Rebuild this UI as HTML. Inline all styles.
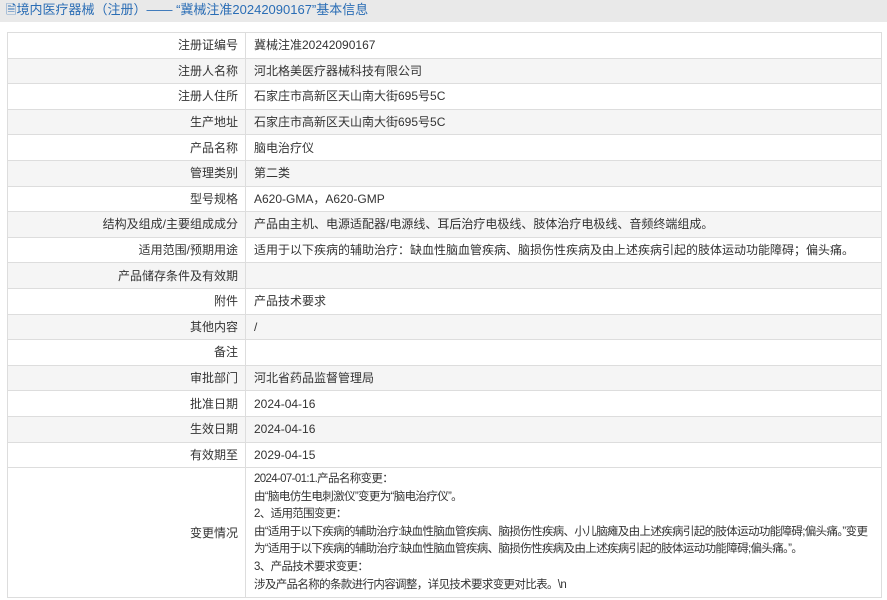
<!DOCTYPE html>
<html><head><meta charset="utf-8"><style>
body{margin:0;width:887px;height:600px;overflow:hidden;background:#fff;font-family:"Liberation Sans","Noto Sans CJK SC",sans-serif;font-size:12px;color:#333}
.hd{height:22px;background:#e9e9e9;color:#2a6db5;font-size:13px;line-height:20px;padding-left:6px}
table{position:absolute;left:7px;top:32px;width:875px;border-collapse:collapse;table-layout:fixed}
td{border:1px solid #ddd;height:24.6px;padding:0 8px;line-height:16px;overflow:hidden}
td.l{width:222px;text-align:right;padding-right:7px}
tr:nth-child(even){background:#f5f5f5}
tr.last{background:#fff}
td.ch{padding:3px 6px 3px 8px;line-height:17.6px;font-size:11.5px;letter-spacing:-0.65px;white-space:nowrap}
</style></head><body>
<div class="hd">🗎境内医疗器械（注册）—— “冀械注准20242090167”基本信息</div>
<table>
<tr><td class="l">注册证编号</td><td>冀械注准20242090167</td></tr>
<tr><td class="l">注册人名称</td><td>河北格美医疗器械科技有限公司</td></tr>
<tr><td class="l">注册人住所</td><td>石家庄市高新区天山南大街695号5C</td></tr>
<tr><td class="l">生产地址</td><td>石家庄市高新区天山南大街695号5C</td></tr>
<tr><td class="l">产品名称</td><td>脑电治疗仪</td></tr>
<tr><td class="l">管理类别</td><td>第二类</td></tr>
<tr><td class="l">型号规格</td><td>A620-GMA，A620-GMP</td></tr>
<tr><td class="l">结构及组成/主要组成成分</td><td>产品由主机、电源适配器/电源线、耳后治疗电极线、肢体治疗电极线、音频终端组成。</td></tr>
<tr><td class="l">适用范围/预期用途</td><td>适用于以下疾病的辅助治疗：缺血性脑血管疾病、脑损伤性疾病及由上述疾病引起的肢体运动功能障碍；偏头痛。</td></tr>
<tr><td class="l">产品储存条件及有效期</td><td></td></tr>
<tr><td class="l">附件</td><td>产品技术要求</td></tr>
<tr><td class="l">其他内容</td><td>/</td></tr>
<tr><td class="l">备注</td><td></td></tr>
<tr><td class="l">审批部门</td><td>河北省药品监督管理局</td></tr>
<tr><td class="l">批准日期</td><td>2024-04-16</td></tr>
<tr><td class="l">生效日期</td><td>2024-04-16</td></tr>
<tr><td class="l">有效期至</td><td>2029-04-15</td></tr>
<tr class="last"><td class="l">变更情况</td><td class="ch">2024-07-01:1.产品名称变更：<br>由“脑电仿生电刺激仪”变更为“脑电治疗仪”。<br>2、适用范围变更：<br>由“适用于以下疾病的辅助治疗:缺血性脑血管疾病、脑损伤性疾病、小儿脑瘫及由上述疾病引起的肢体运动功能障碍;偏头痛。”变更<br>为“适用于以下疾病的辅助治疗:缺血性脑血管疾病、脑损伤性疾病及由上述疾病引起的肢体运动功能障碍;偏头痛。”。<br>3、产品技术要求变更：<br>涉及产品名称的条款进行内容调整，详见技术要求变更对比表。\n</td></tr>
</table>
</body></html>
